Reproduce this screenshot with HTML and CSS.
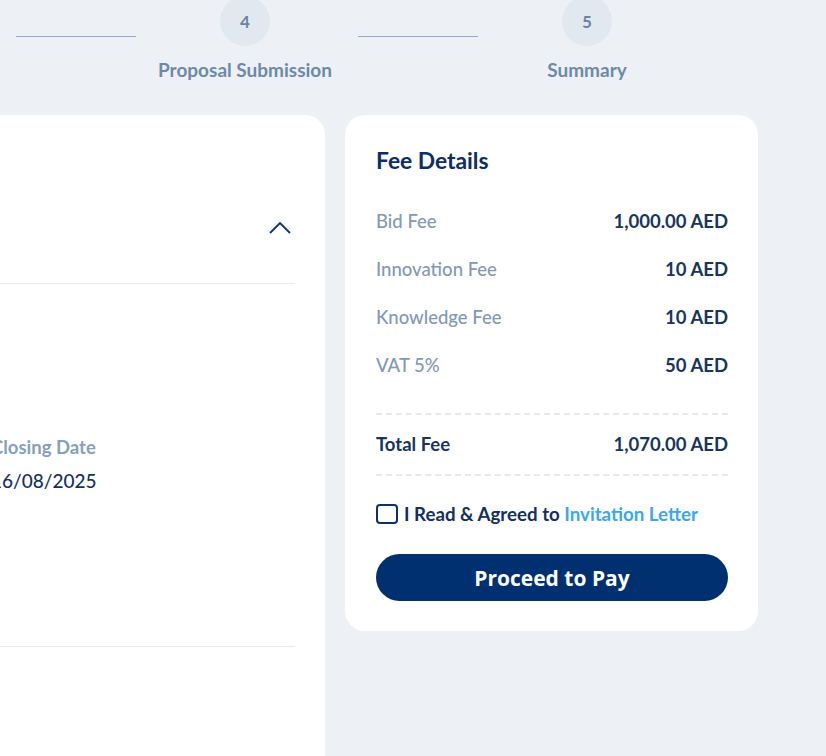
FILE: index.html
```html
<!DOCTYPE html>
<html lang="en">
<head>
<meta charset="utf-8">
<title>Fee Details</title>
<link rel="stylesheet" href="styles.css">
</head>
<body>
<div class="page">
  <div class="stepper">
    <div class="step-line"></div>
    <div class="step step-4">
      <div class="step-circle">4</div>
      <div class="step-label">Proposal Submission</div>
    </div>
    <div class="step-line"></div>
    <div class="step step-5">
      <div class="step-circle">5</div>
      <div class="step-label">Summary</div>
    </div>
  </div>

  <div class="cards">
    <section class="card card-main">
      <div class="main-header">
        <svg class="chevron" width="22" height="13" viewBox="0 0 22 13" aria-hidden="true">
          <path d="M1 12 L11 2 L21 12" fill="none" stroke="#0d3168" stroke-width="1.8"/>
        </svg>
      </div>
      <div class="main-body">
        <div class="field">
          <div class="field-label">Closing Date</div>
          <div class="field-value">16/08/2025</div>
        </div>
      </div>
      <div class="main-footer"></div>
    </section>

    <aside class="card card-fee">
      <h2 class="fee-title">Fee Details</h2>
      <div class="fee-rows">
        <div class="fee-row"><span class="fee-label">Bid Fee</span><span class="fee-value">1,000.00 AED</span></div>
        <div class="fee-row"><span class="fee-label">Innovation Fee</span><span class="fee-value">10 AED</span></div>
        <div class="fee-row"><span class="fee-label">Knowledge Fee</span><span class="fee-value">10 AED</span></div>
        <div class="fee-row"><span class="fee-label">VAT 5%</span><span class="fee-value">50 AED</span></div>
      </div>
      <div class="fee-total">
        <span class="total-label">Total Fee</span><span class="total-value">1,070.00 AED</span>
      </div>
      <label class="agree">
        <span class="checkbox"></span>
        <span class="agree-text">I Read &amp; Agreed to <span class="agree-link">Invitation Letter</span></span>
      </label>
      <button class="pay-btn" type="button">Proceed to Pay</button>
    </aside>
  </div>
</div>
</body>
</html>
```

FILE: styles.css
```css
* { box-sizing: border-box; }

html, body {
  margin: 0;
  padding: 0;
  background: #edf1f6;
  height: 100%;
  overflow: hidden;
}

body {
  font-family: Lato, "Open Sans", "Liberation Sans", sans-serif;
  color: #0d2f66;
}

.page {
  width: 826px;
}

/* Stepper */
.stepper {
  display: flex;
  align-items: flex-start;
  padding-left: 16px;
  margin-top: -4px;
  height: 119px;
}

.step-line {
  width: 120px;
  height: 1px;
  background: #8eaacb;
  margin-top: 40px;
  flex: none;
}

.step {
  width: 190px;
  flex: none;
  display: flex;
  flex-direction: column;
  align-items: center;
}

.step-4 { margin-left: 14px; margin-right: 18px; }
.step-5 { margin-left: 14px; }

.step-circle {
  width: 50px;
  height: 50px;
  border-radius: 50%;
  background: #e2e8ef;
  color: #6784a6;
  font-weight: 700;
  font-size: 17px;
  display: flex;
  align-items: center;
  justify-content: center;
}

.step-label {
  margin-top: 12px;
  line-height: 24px;
  font-size: 19px;
  font-weight: 700;
  color: #6c89aa;
  white-space: nowrap;
}

/* Cards */
.cards {
  display: flex;
  align-items: flex-start;
  gap: 20px;
  margin-left: -160px;
}

.card {
  background: #ffffff;
  border-radius: 20px;
  flex: none;
}

.card-main {
  width: 485px;
  height: 700px;
}

.main-header {
  height: 169px;
  margin-right: 30px;
  border-bottom: 1px solid #e6e9ee;
  display: flex;
  justify-content: flex-end;
  padding-top: 106px;
  padding-right: 4px;
}

.chevron { display: block; }

.main-body {
  height: 363px;
  margin-right: 30px;
  border-bottom: 1px solid #e6e9ee;
  padding-top: 152px;
  padding-left: 151px;
}

.field-label {
  font-size: 18.5px;
  line-height: 22px;
  font-weight: 700;
  color: #86a0bc;
}

.field-value {
  margin-top: 11px;
  font-size: 19px;
  line-height: 24px;
  color: #13335f;
  font-weight: 500;
}

/* Fee card */
.card-fee {
  width: 413px;
  padding: 31px 30px 30px 31px;
}

.fee-title {
  margin: 0;
  font-size: 22.8px;
  line-height: 28px;
  font-weight: 700;
  color: #0b2d69;
}

.fee-rows {
  margin-top: 35px;
  display: flex;
  flex-direction: column;
  gap: 24px;
  padding-bottom: 36px;
  border-bottom: 2px dashed #e4e9ef;
}

.fee-row, .fee-total {
  display: flex;
  justify-content: space-between;
  line-height: 24px;
  font-size: 18.5px;
}

.fee-label {
  color: #7f99b7;
  font-weight: 500;
}

.fee-value {
  color: #18345f;
  font-weight: 700;
}

.fee-total {
  padding: 17px 0 18px;
  border-bottom: 2px dashed #e4e9ef;
}

.total-label, .total-value {
  color: #18345f;
  font-weight: 700;
}

.agree {
  margin-top: 26px;
  display: flex;
  align-items: center;
  gap: 6px;
  line-height: 24px;
  font-size: 18.7px;
  font-weight: 700;
  color: #13305f;
}

.checkbox {
  width: 22px;
  height: 20px;
  border: 2px solid #0d3168;
  border-radius: 4px;
  flex: none;
}

.agree-link {
  color: #3aa7f1;
}

.pay-btn {
  margin-top: 28px;
  width: 100%;
  height: 47px;
  border: none;
  border-radius: 24px;
  background: #003070;
  color: #ffffff;
  font-family: "Open Sans", Lato, sans-serif;
  font-size: 21px;
  font-weight: 700;
  cursor: pointer;
}
```
